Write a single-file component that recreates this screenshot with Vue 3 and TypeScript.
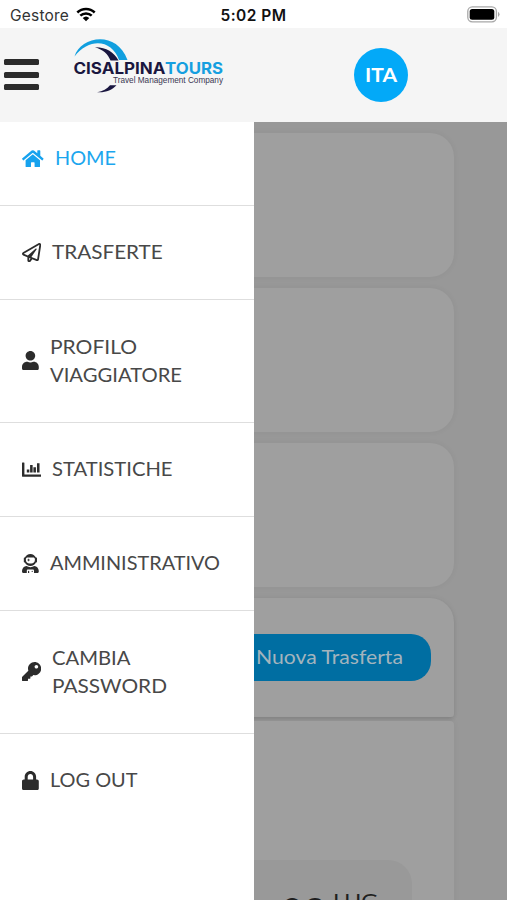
<script setup lang="ts">
interface Line { text: string; width: number }
interface Item { id: string; box: string; width: number; gap: number; path: string; lines: Line[]; active?: boolean }

const items: Item[] = [
  {
    id: 'home', box: '0 0 576 512', width: 21.6, gap: 11.8, active: true,
    lines: [{ text: 'HOME', width: 61 }],
    path: 'M280.37 148.26L96 300.11V464a16 16 0 0 0 16 16l112.06-.29a16 16 0 0 0 15.92-16V368a16 16 0 0 1 16-16h64a16 16 0 0 1 16 16v95.64a16 16 0 0 0 16 16.05L464 480a16 16 0 0 0 16-16V300L295.67 148.26a12.19 12.19 0 0 0-15.3 0zM571.6 251.47L488 182.56V44.05a12 12 0 0 0-12-12h-56a12 12 0 0 0-12 12v72.61L318.47 43a48 48 0 0 0-61 0L4.34 251.47a12 12 0 0 0-1.6 16.9l25.5 31A12 12 0 0 0 45.15 301l235.22-193.74a12.19 12.19 0 0 1 15.3 0L530.9 301a12 12 0 0 0 16.9-1.6l25.5-31a12 12 0 0 0-1.7-16.93z',
  },
  {
    id: 'trips', box: '0 0 512 512', width: 19.2, gap: 11,
    lines: [{ text: 'TRASFERTE', width: 110.8 }],
    path: 'M440 6.5L24 246.4c-34.4 19.9-31.1 70.8 5.7 85.9L144 379.6V464c0 46.4 59.2 65.5 86.6 28.6l43.8-59.1 111.9 46.2c5.9 2.4 12.1 3.6 18.3 3.6 8.2 0 16.3-2.1 23.6-6.2 12.8-7.2 21.6-20 23.9-34.5l59.4-387.2c6.1-40.1-36.9-68.8-71.5-48.9zM192 464v-64.6l36.6 15.1L192 464zm212.6-28.7l-153.8-63.5L391 169.5c10.7-15.5-9.5-33.5-23.7-21.2L155.8 332.6 48 288 464 48l-59.4 387.3z',
  },
  {
    id: 'profile', box: '0 0 448 512', width: 16.8, gap: 11.2,
    lines: [{ text: 'PROFILO', width: 87 }, { text: 'VIAGGIATORE', width: 132 }],
    path: 'M224 256c70.7 0 128-57.3 128-128S294.7 0 224 0 96 57.3 96 128s57.3 128 128 128zm89.6 32h-16.7c-22.2 10.2-46.9 16-72.9 16s-50.6-5.8-72.9-16h-16.7C60.2 288 0 348.2 0 422.4V464c0 26.5 21.5 48 48 48h352c26.5 0 48-21.5 48-48v-41.6c0-74.2-60.2-134.4-134.4-134.4z',
  },
  {
    id: 'stats', box: '0 0 512 512', width: 19.2, gap: 11.2,
    lines: [{ text: 'STATISTICHE', width: 120.5 }],
    path: 'M500 384c6.600 0 12 5.400 12 12v40c0 6.600-5.400 12-12 12H12c-6.600 0-12-5.400-12-12V76c0-6.600 5.400-12 12-12h40c6.600 0 12 5.400 12 12v308h436zM128 256h68v80h-68zM216 136h68v200h-68zM304 192h68v144h-68zM400 84h68v252h-68z',
  },
  {
    id: 'admin', box: '0 0 448 512', width: 16.8, gap: 11.2,
    lines: [{ text: 'AMMINISTRATIVO', width: 170 }],
    path: 'M64 224h13.5c24.7 56.5 80.9 96 146.5 96s121.8-39.5 146.5-96H384c8.8 0 16-7.2 16-16v-96c0-8.8-7.2-16-16-16h-13.5C345.8 39.5 289.6 0 224 0S102.2 39.5 77.5 96H64c-8.8 0-16 7.2-16 16v96c0 8.8 7.2 16 16 16zm40-88c0-22.1 21.5-40 48-40h144c26.5 0 48 17.9 48 40v24c0 53-43 96-96 96h-48c-53 0-96-43-96-96v-24zm72 72l12-36 36-12-36-12-12-36-12 36-36 12 36 12 12 36zm151.6 113.4C297.7 340.7 262.2 352 224 352s-73.7-11.3-103.6-30.6C52.9 328.5 0 385 0 454.4v9.6c0 26.5 21.5 48 48 48h80v-64c0-17.7 14.3-32 32-32h128c17.7 0 32 14.3 32 32v64h80c26.5 0 48-21.5 48-48v-9.6c0-69.4-52.9-125.9-120.4-133zM272 448c-8.8 0-16 7.2-16 16s7.2 16 16 16 16-7.2 16-16-7.2-16-16-16zm-96 0c-8.8 0-16 7.2-16 16v48h32v-48c0-8.8-7.2-16-16-16z',
  },
  {
    id: 'password', box: '0 0 512 512', width: 19.2, gap: 11.2,
    lines: [{ text: 'CAMBIA', width: 78.5 }, { text: 'PASSWORD', width: 115 }],
    path: 'M512 176.001C512 273.203 433.202 352 336 352c-11.22 0-22.19-1.062-32.827-3.069l-24.012 27.014A23.999 23.999 0 0 1 261.223 384H224v40c0 13.255-10.745 24-24 24h-40v40c0 13.255-10.745 24-24 24H24c-13.255 0-24-10.745-24-24v-78.059c0-6.365 2.529-12.47 7.029-16.971l161.802-161.802C163.108 213.814 160 195.271 160 176 160 78.798 238.797.001 335.999 0 433.488-.001 512 78.511 512 176.001zM336 128c0 26.51 21.49 48 48 48s48-21.49 48-48-21.49-48-48-48-48 21.49-48 48z',
  },
  {
    id: 'logout', box: '0 0 448 512', width: 16.8, gap: 11.2,
    lines: [{ text: 'LOG OUT', width: 87.5 }],
    path: 'M400 224h-24v-72C376 68.2 307.8 0 224 0S72 68.2 72 152v72H48c-26.5 0-48 21.5-48 48v192c0 26.500 21.500 48 48 48h352c26.500 0 48-21.500 48-48V272c0-26.500-21.500-48-48-48zm-104 0H152v-72c0-39.700 32.300-72 72-72s72 32.300 72 72v72z',
  },
]
</script>

<template>
  <div class="screen">
    <div class="status">
      <div class="carrier">
        <span class="carrier-name">Gestore</span>
        <svg class="wifi" viewBox="0 0 20 15" width="20" height="15">
          <path d="M1.300 5.500a12.500 12.500 0 0 1 17.400 0M4.300 8.700a8.200 8.200 0 0 1 11.400 0" fill="none" stroke="#000" stroke-width="2.500" />
          <path d="M10 14.300l-3.300-3.300a4.800 4.800 0 0 1 6.600 0z" />
        </svg>
      </div>
      <span class="time">5:02 PM</span>
      <svg class="battery" viewBox="0 0 33 17" width="33" height="17">
        <rect x=".8" y=".8" width="28.600" height="15" rx="4.500" fill="#fff" stroke="#a8a8a8" stroke-width="1.300" />
        <rect x="2.700" y="2.900" width="24.600" height="10.800" rx="2.500" />
        <path d="M31 5.700q1.500 1 1.500 2.600t-1.500 2.600z" fill="#a8a8a8" />
      </svg>
    </div>

    <header class="header">
      <button class="burger" aria-label="Menu"><i /><i /><i /></button>
      <svg class="logo" viewBox="0 0 152 56" width="152" height="56">
        <path d="M1.500 18.500C7-1 43-9 54.500 22h-8.500C39 2 17-1 1.500 18.500z" fill="#119fdf" />
        <path d="M22 9.200C33 9 41 14 45.500 22.500h-8C35 16 30 11.500 22 9.200z" fill="#1a1740" />
        <path d="M24 54.200c8 .8 15-2.200 19.500-7h-6.500c-3 3.500-7 6-13 7z" fill="#1a1740" />
        <text class="brand" x="0.500" y="36" textLength="92" lengthAdjust="spacingAndGlyphs" fill="#1a1740">CISALPINA</text>
        <text class="brand" x="92" y="36" textLength="58" lengthAdjust="spacingAndGlyphs" fill="#159fe0">TOURS</text>
        <text class="tagline" x="40" y="45.300" textLength="110" lengthAdjust="spacingAndGlyphs">Travel Management Company</text>
      </svg>
      <button class="lang">
        <svg width="34" height="24">
          <text x="1" y="18.700" textLength="32" lengthAdjust="spacingAndGlyphs">ITA</text>
        </svg>
      </button>
    </header>

    <div class="body">
      <main class="page">
        <section class="card" />
        <section class="card" />
        <section class="card" />
        <section class="card action">
          <button class="new-trip">
            <svg width="148" height="28">
              <text x="0" y="20.200" textLength="147" lengthAdjust="spacingAndGlyphs">Nuova Trasferta</text>
            </svg>
          </button>
        </section>
        <section class="card list">
          <div class="trip">
            <svg class="date" width="100" height="60">
              <text class="day" x="2" y="35" textLength="45" lengthAdjust="spacingAndGlyphs">02</text>
              <text class="month" x="54" y="15.500" textLength="45" lengthAdjust="spacingAndGlyphs">LUG</text>
            </svg>
          </div>
        </section>
      </main>

      <nav class="drawer">
        <a v-for="item in items" :key="item.id" class="item" :class="{ active: item.active }">
          <svg class="icon" :viewBox="item.box" :width="item.width" height="19.200">
            <path :d="item.path" />
          </svg>
          <span class="label" :style="{ marginLeft: item.gap + 'px' }">
            <svg v-for="line in item.lines" :key="line.text" class="line" :width="line.width + 2" height="28.200">
              <text x="0" y="20.600" :textLength="line.width" lengthAdjust="spacingAndGlyphs">{{ line.text }}</text>
            </svg>
          </span>
        </a>
      </nav>
    </div>
  </div>
</template>

<style>
body { margin: 0; overflow: hidden; }
</style>

<style scoped>
.screen {
  width: 507px;
  height: 900px;
  display: flex;
  flex-direction: column;
  overflow: hidden;
  background: #fff;
  font-family: Lato, "Open Sans", sans-serif;
}
button { border: 0; padding: 0; margin: 0; font: inherit; }
.status {
  height: 28px;
  flex: none;
  display: grid;
  grid-template-columns: 1fr auto 1fr;
  align-items: center;
  padding: 2px 7px 0 10px;
  box-sizing: border-box;
  font-family: Inter, sans-serif;
  color: #111;
}
.carrier { display: flex; align-items: center; gap: 7px; }
.carrier-name { font-size: 15.500px; letter-spacing: .2px; color: #333; }
.wifi { margin-top: -1px; }
.time { font-size: 15.500px; font-weight: 600; letter-spacing: .45px; margin-left: -3px; }
.battery { justify-self: end; margin-top: -1px; }
.header {
  height: 94px;
  flex: none;
  display: flex;
  align-items: flex-start;
  background: #f5f5f5;
}
.burger {
  width: 35px;
  margin: 31px 0 0 4px;
  display: flex;
  flex-direction: column;
  gap: 6.500px;
  background: none;
}
.burger i { height: 6px; border-radius: 1.500px; background: #2b2b2b; }
.logo { margin: 10px 0 0 34px; }
.brand { font: 700 15.500px Inter, sans-serif; }
.tagline { font: 8.200px "Liberation Sans", sans-serif; fill: #3b3852; }
.lang {
  width: 54px;
  height: 54px;
  margin: 20px 0 0 129px;
  border-radius: 50%;
  background: #03a9f8;
  display: flex;
  align-items: center;
  justify-content: center;
}
.lang text { font: 700 18.500px Lato, sans-serif; fill: #fff; }
.body { position: relative; flex: 1; min-height: 0; overflow: hidden; background: #989898; }
.page {
  display: flex;
  flex-direction: column;
  gap: 11px;
  padding: 11px 53px 0;
}
.card {
  height: 144px;
  flex: none;
  border-radius: 24px;
  background: #9f9f9f;
  box-shadow: 0 0 6px rgba(0, 0, 0, .05);
}
.action {
  height: 119px;
  box-sizing: border-box;
  padding: 36px 23px 0 0;
  display: flex;
  justify-content: flex-end;
  align-items: flex-start;
  border-radius: 24px 24px 3px 3px;
  box-shadow: 0 2px 4px -1px rgba(0, 0, 0, .16), 0 0 6px rgba(0, 0, 0, .05);
}
.new-trip {
  width: 203px;
  height: 47px;
  padding-right: 27px;
  border-radius: 20px;
  background: #006ea2;
  display: flex;
  justify-content: flex-end;
  align-items: center;
}
.new-trip text { font: 19.500px Lato, sans-serif; fill: #a3b4bd; }
.list {
  height: 300px;
  margin-top: -7px;
  border-radius: 4px 4px 0 0;
  box-sizing: border-box;
  padding: 139px 42px 0 20px;
}
.trip {
  height: 160px;
  box-sizing: border-box;
  padding: 32px 33px 0 0;
  border-radius: 24px;
  background: #999;
  display: flex;
  justify-content: flex-end;
  color: #1f1f1f;
}
.date { flex: none; fill: currentColor; }
.day { font: 700 41px Lato, sans-serif; }
.month { font: 20px Lato, sans-serif; }
.drawer {
  position: absolute;
  top: -10.500px;
  bottom: 0;
  left: 0;
  width: 254px;
  background: #fff;
}
.item {
  display: flex;
  align-items: center;
  padding: 32.600px 0 32.500px 22px;
  border-bottom: 1px solid #dedede;
  color: #484848;
}
.item:last-child { border-bottom: 0; }
.icon { flex: none; fill: #2c2c2c; }
.label { display: flex; flex-direction: column; }
.line { display: block; overflow: visible; }
.line text { font: 19.200px Lato, sans-serif; fill: currentColor; }
.active { color: #1ba6ee; }
.active .icon { fill: #16a2ee; }
</style>
